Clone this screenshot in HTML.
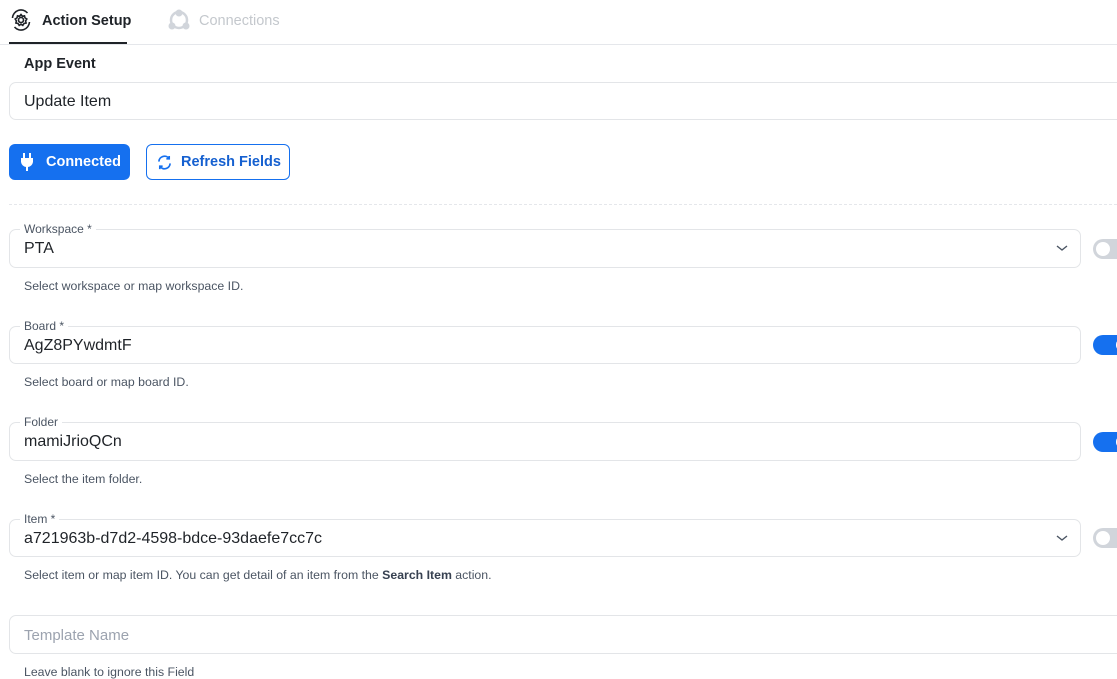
<!DOCTYPE html>
<html><head><style>
body{margin:0;width:1117px;height:679px;overflow:hidden;background:#fff;font-family:"Liberation Sans",sans-serif;position:relative;color:#1f2328}
.a{position:absolute}
.box{position:absolute;border:1px solid #e3e5e8;border-radius:7px;box-sizing:border-box;background:#fff}
.val{position:absolute;left:14px;font-size:16px;color:#1f2328}
.lab{position:absolute;left:10px;top:-8px;background:#fff;padding:0 4px;font-size:12px;color:#4b5563}
.help{position:absolute;left:24px;font-size:12.3px;color:#4b5563}
.tog{position:absolute;left:1093px;width:40px;height:20px;border-radius:10px}
.tog i{position:absolute;left:3px;top:3px;width:14px;height:14px;border-radius:50%;background:#fff}
.tog.on{background:#1570ef}.tog.on i{left:23px}
.tog.off{background:#d1d5db}
.chev{position:absolute;right:12px;top:14px}
</style></head><body>
<div class="a" style="left:0;top:44px;width:1117px;height:1px;background:#e5e7eb"></div>
<div class="a" style="left:9px;top:42px;width:118px;height:2px;background:#1f2328"></div>
<svg class="a" style="left:10px;top:9px" width="22" height="22" viewBox="0 0 22 22" fill="none" stroke="#1f2328" stroke-width="1.6"><circle cx="11" cy="11" r="2.5"/><path d="M11 5.5l1.4 1.8 2.1-.5.5 2.1 1.8 1.1-1.2 1.9.5 2.1-2.1.5-1.2 1.9-1.8-1.2-1.8 1.2-1.2-1.9-2.1-.5.5-2.1-1.2-1.9 1.8-1.1.5-2.1 2.1.5z"/><path d="M2.5 9a8.5 8.5 0 0 1 15-5M19.5 13a8.5 8.5 0 0 1-15 5"/></svg>
<div class="a" style="left:42px;top:13px;font-size:14.5px;font-weight:bold">Action Setup</div>
<svg class="a" style="left:168px;top:9px" width="22" height="22" viewBox="0 0 22 22" fill="#d1d5db"><circle cx="11" cy="11" r="8" fill="none" stroke="#d1d5db" stroke-width="2.5"/><circle cx="11" cy="4" r="3.5"/><circle cx="4" cy="17" r="3.5"/><circle cx="18" cy="17" r="3.5"/></svg>
<div class="a" style="left:199px;top:13px;font-size:14.5px;color:#c4c8cd">Connections</div>
<div class="a" style="left:24px;top:56px;font-size:14.5px;font-weight:bold">App Event</div>
<div class="box" style="left:9px;top:82px;width:1120px;height:38px"><div class="val" style="top:10px">Update Item</div></div>
<div class="a" style="left:9px;top:144px;width:121px;height:36px;background:#1570ef;border-radius:6px;color:#fff;font-weight:bold;font-size:14.5px">
<svg class="a" style="left:11px;top:9px" width="14" height="18" viewBox="0 0 14 18" fill="#fff"><rect x="3" y="0" width="2" height="5"/><rect x="9" y="0" width="2" height="5"/><path d="M1 5h12v4a6 6 0 0 1-5 5v4H6v-4a6 6 0 0 1-5-5z"/></svg>
<span class="a" style="left:37px;top:10px">Connected</span></div>
<div class="a" style="left:146px;top:144px;width:144px;height:36px;box-sizing:border-box;border:1px solid #1570ef;border-radius:6px;color:#1560d0;font-weight:bold;font-size:14.5px">
<svg class="a" style="left:10px;top:10px" width="15" height="15" viewBox="0 0 16 16" fill="none" stroke="#1570ef" stroke-width="1.8"><path d="M2 7a6 6 0 0 1 11-3M14 9a6 6 0 0 1-11 3"/><path d="M13 1v3h-3M3 15v-3h3"/></svg>
<span class="a" style="left:34px;top:9px">Refresh Fields</span></div>
<div class="a" style="left:9px;top:204px;width:1108px;border-top:1px dashed #e5e7eb"></div>

<div class="box" style="left:9px;top:229px;width:1072px;height:39px"><div class="lab">Workspace *</div><div class="val" style="top:10px">PTA</div><svg class="chev" width="12" height="8"><path d="M1 2l5 4 5-4" stroke="#4b5563" fill="none" stroke-width="1.4"/></svg></div>
<div class="tog off" style="top:239px"><i></i></div>
<div class="help" style="top:279px">Select workspace or map workspace ID.</div>

<div class="box" style="left:9px;top:326px;width:1072px;height:38px"><div class="lab">Board *</div><div class="val" style="top:10px">AgZ8PYwdmtF</div></div>
<div class="tog on" style="top:335px"><i></i></div>
<div class="help" style="top:375px">Select board or map board ID.</div>

<div class="box" style="left:9px;top:422px;width:1072px;height:39px"><div class="lab">Folder</div><div class="val" style="top:10px">mamiJrioQCn</div></div>
<div class="tog on" style="top:432px"><i></i></div>
<div class="help" style="top:472px">Select the item folder.</div>

<div class="box" style="left:9px;top:519px;width:1072px;height:38px"><div class="lab">Item *</div><div class="val" style="top:10px">a721963b-d7d2-4598-bdce-93daefe7cc7c</div><svg class="chev" width="12" height="8"><path d="M1 2l5 4 5-4" stroke="#4b5563" fill="none" stroke-width="1.4"/></svg></div>
<div class="tog off" style="top:528px"><i></i></div>
<div class="help" style="top:568px">Select item or map item ID. You can get detail of an item from the <b style="color:#374151">Search Item</b> action.</div>

<div class="box" style="left:9px;top:615px;width:1120px;height:39px"><div class="val" style="top:11px;color:#9ca3af;font-size:15px">Template Name</div></div>
<div class="help" style="top:665px">Leave blank to ignore this Field</div>
</body></html>
